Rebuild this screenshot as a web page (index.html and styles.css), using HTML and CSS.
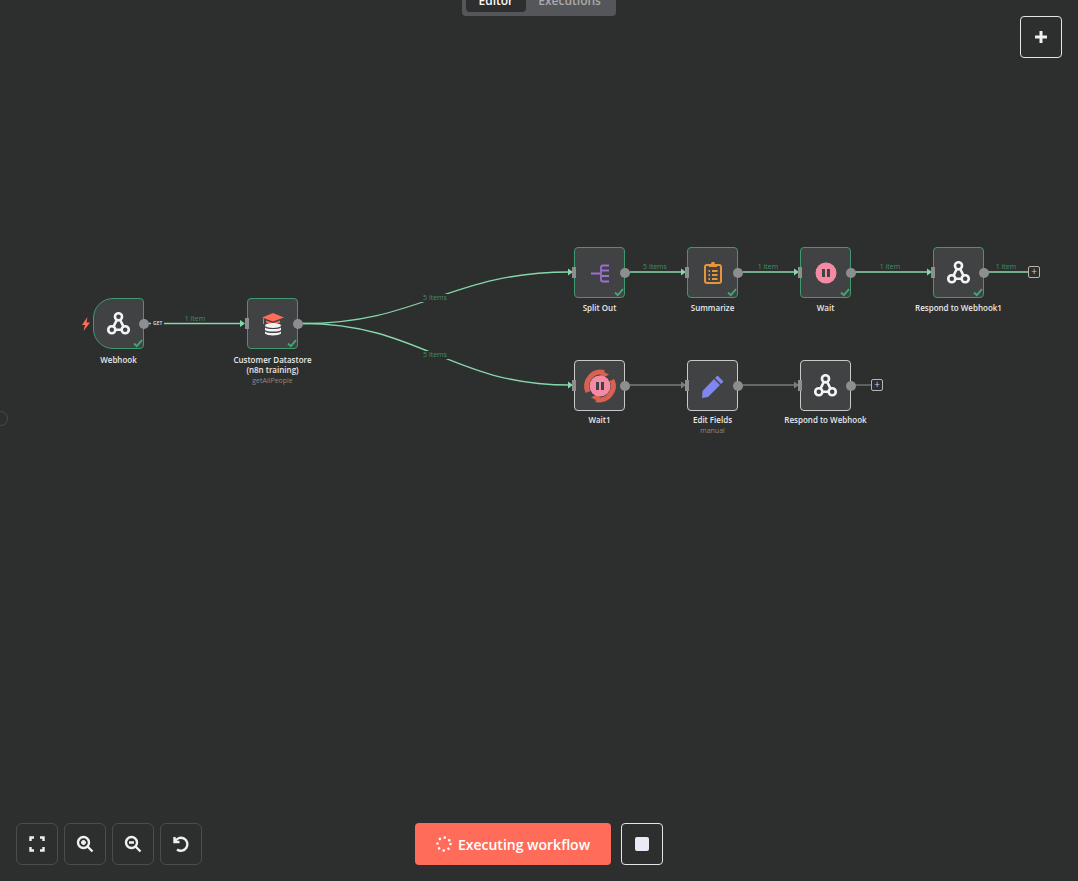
FILE: index.html
```html
<!DOCTYPE html>
<html lang="en">
  <head>
    <meta charset="UTF-8" />
    <title>Workflow</title>
    <link rel="stylesheet" href="styles.css">
  </head>
  <body>
    <svg class="defs" width="0" height="0">
      <symbol id="webhook" viewBox="0 0 24 24">
        <circle cx="12" cy="5" r="3.700" />
        <circle cx="5" cy="18.500" r="3.700" />
        <circle cx="19" cy="18.500" r="3.700" />
        <path d="M10.200 8.300 6.800 15.200M13.800 8.300 17.200 15.200M8.700 18.500H15.300" />
      </symbol>
      <symbol id="check" viewBox="0 0 10 10">
        <path d="M1 5.500 3.800 8.200 9 2.200" />
      </symbol>
    </svg>

    <div class="canvas">
      <!-- connections between the nodes -->
      <svg class="edges" width="1078" height="881">
        <g class="edge-done">
          <path d="M149 323.500H243" />
          <path d="M303 323.500C420 323.500 450 272 570 272" />
          <path d="M303 323.500C420 323.500 450 385 570 385" />
          <path d="M630 272H683" />
          <path d="M743 272H796" />
          <path d="M855 272H929" />
          <path d="M988 272H1028" />
        </g>
        <g class="edge-idle">
          <path d="M630 385H683" />
          <path d="M743 385H796" />
          <path d="M855 385H871" />
        </g>
        <g class="arrow-done">
          <path d="M240 320 245 323.500 240 327Z" />
          <path d="M568 268.500 573 272 568 275.500Z" />
          <path d="M568 381.500 573 385 568 388.500Z" />
          <path d="M681 268.500 686 272 681 275.500Z" />
          <path d="M794 268.500 799 272 794 275.500Z" />
          <path d="M927 268.500 932 272 927 275.500Z" />
        </g>
        <g class="arrow-idle">
          <path d="M681 381.500 686 385 681 388.500Z" />
          <path d="M794 381.500 799 385 794 388.500Z" />
        </g>
      </svg>

      <span class="edge-label label-a">1 item</span>
      <span class="edge-label label-b">5 items</span>
      <span class="edge-label label-c">5 items</span>
      <span class="edge-label label-d">5 items</span>
      <span class="edge-label label-e">1 item</span>
      <span class="edge-label label-f">1 item</span>
      <span class="edge-label label-g">1 item</span>
      <span class="get-label">GET</span>

      <svg class="bolt" width="10" height="14" viewBox="0 0 10 14">
        <path d="M6.500 0 1 8h3L2.500 14 9 5.500H5.500Z" />
      </svg>

      <!-- first branch -->
      <div class="node done trigger n-webhook">
        <svg class="icon line-icon" width="23" height="23"><use href="#webhook" /></svg>
        <svg class="check" width="10" height="10"><use href="#check" /></svg>
        <i class="port-out"></i>
        <div class="node-label">Webhook</div>
      </div>

      <div class="node done n-store">
        <svg class="icon" width="24" height="24" viewBox="0 0 24 24">
          <path class="cap" d="M12 1 23 5.500 12 9.500 1 5.500Z" />
          <path class="cap" d="M5 8.500 12 11 19 8.500V10.500L12 12.500 5 10.500Z" />
          <path class="cap" d="M2 6.500H3V12H2Z" />
          <ellipse class="drum" cx="12" cy="13.500" rx="8" ry="2.500" />
          <path class="drum" d="M4 15.500C6 17.500 18 17.500 20 15.500V18C18 20 6 20 4 18Z" />
          <path class="drum" d="M4 19.500C6 21.500 18 21.500 20 19.500V21.500C18 24 6 24 4 21.500Z" />
        </svg>
        <svg class="check" width="10" height="10"><use href="#check" /></svg>
        <i class="port-in"></i><i class="port-out"></i>
        <div class="node-label">Customer Datastore<br />(n8n training)<small>getAllPeople</small></div>
      </div>

      <div class="node done upper n-split">
        <svg class="icon" width="24" height="24" viewBox="0 0 24 24">
          <path class="split" d="M3 12.500H12M21 4.500H15Q13 4.500 13 6.500V18.500Q13 20.500 15 20.500H21M14 9.500H21M14 15H21" />
        </svg>
        <svg class="check" width="10" height="10"><use href="#check" /></svg>
        <i class="port-in"></i><i class="port-out"></i>
        <div class="node-label">Split Out</div>
      </div>

      <div class="node done upper n-summarize">
        <svg class="icon" width="24" height="24" viewBox="0 0 24 24">
          <path class="clip" d="M8 4H6Q4 4 4 6V20Q4 22 6 22H18Q20 22 20 20V6Q20 4 18 4H16" />
          <path class="clip-fill" d="M8 3H10C10 0 14 0 14 3H16V6H8Z" />
          <path class="clip" d="M7.500 10H9M11 10H16.500M7.500 14H9M11 14H16.500M7.500 18H9M11 18H16.500" />
        </svg>
        <svg class="check" width="10" height="10"><use href="#check" /></svg>
        <i class="port-in"></i><i class="port-out"></i>
        <div class="node-label">Summarize</div>
      </div>

      <div class="node done upper n-wait">
        <svg class="icon" width="22" height="22" viewBox="0 0 22 22">
          <circle class="pause-bg" cx="11" cy="11" r="10.500" />
          <path class="pause-bar" d="M7 7H10V15H7ZM12 7H15V15H12Z" />
        </svg>
        <svg class="check" width="10" height="10"><use href="#check" /></svg>
        <i class="port-in"></i><i class="port-out"></i>
        <div class="node-label">Wait</div>
      </div>

      <div class="node done upper n-respond1">
        <svg class="icon line-icon" width="23" height="23"><use href="#webhook" /></svg>
        <svg class="check" width="10" height="10"><use href="#check" /></svg>
        <i class="port-in"></i><i class="port-out"></i>
        <div class="node-label">Respond to Webhook1</div>
      </div>

      <div class="add-box add-a">+</div>

      <!-- second branch -->
      <div class="node lower n-wait1">
        <svg class="icon spin-icon" width="32" height="32" viewBox="0 0 32 32">
          <path class="spin-arc" d="M4 22A14 14 0 0 1 20 2.500" />
          <path class="spin-head" d="M16 0 25 4.500 17 9Z" />
          <path class="spin-arc" d="M28 10A14 14 0 0 1 12 29.500" />
          <path class="spin-head" d="M16 32 7 27.500 15 23Z" />
          <circle class="pause-bg" cx="16" cy="16" r="10.500" />
          <path class="pause-bar" d="M12 12H15V20H12ZM17 12H20V20H17Z" />
        </svg>
        <i class="port-in"></i><i class="port-out"></i>
        <div class="node-label">Wait1</div>
      </div>

      <div class="node lower n-edit">
        <svg class="icon" width="24" height="24" viewBox="0 0 24 24">
          <path class="pencil" d="M16.500 1.500 22.500 7.500 20 10 14 4ZM13 5 19 11 7 23 1 24 1.500 17Z" />
        </svg>
        <i class="port-in"></i><i class="port-out"></i>
        <div class="node-label">Edit Fields<small>manual</small></div>
      </div>

      <div class="node lower n-respond">
        <svg class="icon line-icon" width="23" height="23"><use href="#webhook" /></svg>
        <i class="port-in"></i><i class="port-out"></i>
        <div class="node-label">Respond to Webhook</div>
      </div>

      <div class="add-box add-b">+</div>

      <div class="side-toggle"></div>
    </div>

    <div class="tabs">
      <span class="tab active">Editor</span>
      <span class="tab">Executions</span>
    </div>

    <button class="btn-square add-node" type="button">
      <svg width="16" height="16" viewBox="0 0 16 16"><path class="plus-line" d="M8 2V14M2 8H14" /></svg>
    </button>

    <!-- zoom controls -->
    <div class="zoom-tools">
      <button class="tool" type="button">
        <svg width="16" height="16" viewBox="0 0 16 16"><path class="tool-line" d="M1.500 5V1.500H5M11 1.500H14.500V5M14.500 11V14.500H11M5 14.500H1.500V11" /></svg>
      </button>
      <button class="tool" type="button">
        <svg width="18" height="18" viewBox="0 0 18 18"><circle class="tool-line" cx="7.500" cy="7.500" r="5.500" /><path class="tool-line" d="M11.500 11.500 16.500 16.500M7.500 5V10M5 7.500H10" /></svg>
      </button>
      <button class="tool" type="button">
        <svg width="18" height="18" viewBox="0 0 18 18"><circle class="tool-line" cx="7.500" cy="7.500" r="5.500" /><path class="tool-line" d="M11.500 11.500 16.500 16.500M5 7.500H10" /></svg>
      </button>
      <button class="tool" type="button">
        <svg width="18" height="18" viewBox="0 0 18 18"><path class="tool-line" d="M2.500 2V7H7.500M2.800 7A6.500 6.500 0 1 1 5 14.500" /></svg>
      </button>
    </div>

    <div class="run-tools">
      <button class="run-btn" type="button">
        <svg width="16" height="16" viewBox="0 0 16 16"><circle class="spinner" cx="8" cy="8" r="6.500" /></svg>
        Executing workflow
      </button>
      <button class="btn-square" type="button"><span class="stop"></span></button>
    </div>
  </body>
</html>
```

FILE: styles.css
```css
html,
body {
  margin: 0;
  height: 100%;
  overflow: hidden;
}

body {
  position: relative;
  background-color: #2d2e2e;
  font-family: "Open Sans", "Liberation Sans", sans-serif;
}

button {
  font-family: inherit;
  cursor: pointer;
}

.defs {
  position: absolute;
}

.canvas {
  position: absolute;
  inset: 0;
}

.edges {
  position: absolute;
  left: 0;
  top: 0;
}

.edge-done path {
  fill: none;
  stroke: #86d8ac;
  stroke-width: 1.300;
}

.edge-idle path {
  fill: none;
  stroke: #7b7c7d;
  stroke-width: 1.300;
}

.arrow-done path {
  fill: #86d8ac;
}

.arrow-idle path {
  fill: #7b7c7d;
}

/* text on the connections */
.edge-label {
  position: absolute;
  transform: translateX(-50%);
  padding: 0 2px;
  color: #3f9168;
  font-size: 7px;
  line-height: 8px;
  white-space: nowrap;
}

.label-a { left: 195px; top: 315px; }
.label-b { left: 435px; top: 294px; background-color: #2d2e2e; }
.label-c { left: 435px; top: 351px; background-color: #2d2e2e; }
.label-d { left: 655px; top: 263px; }
.label-e { left: 768px; top: 263px; }
.label-f { left: 890px; top: 263px; }
.label-g { left: 1006px; top: 263px; }

.get-label {
  position: absolute;
  left: 151px;
  top: 320px;
  padding: 0 2px;
  background-color: #2d2e2e;
  color: #e4e4e4;
  font-size: 5px;
  font-weight: 600;
  line-height: 7px;
}

.bolt {
  position: absolute;
  left: 81px;
  top: 317px;
  fill: #ff6d5a;
}

/* nodes */
.node {
  position: absolute;
  box-sizing: border-box;
  display: flex;
  align-items: center;
  justify-content: center;
  width: 51px;
  height: 51px;
  background-color: #414244;
  border: 1.500px solid #c9c9c9;
  border-radius: 4px;
}

.node.done {
  border-color: #3f9a6e;
}

.node.trigger {
  border-radius: 20px 4px 4px 20px;
}

.n-webhook { left: 93px; top: 298px; }
.n-store { left: 247px; top: 298px; }
.n-split { left: 574px; top: 247px; }
.n-summarize { left: 687px; top: 247px; }
.n-wait { left: 800px; top: 247px; }
.n-respond1 { left: 933px; top: 247px; }
.n-wait1 { left: 574px; top: 360px; }
.n-edit { left: 687px; top: 360px; }
.n-respond { left: 800px; top: 360px; }

.port-out {
  position: absolute;
  right: -6px;
  top: 50%;
  width: 10px;
  height: 10px;
  margin-top: -5px;
  border-radius: 50%;
  background-color: #8d8e8f;
}

.port-in {
  position: absolute;
  left: -3px;
  top: 50%;
  width: 4px;
  height: 11px;
  margin-top: -5.500px;
  background-color: #8d8e8f;
}

.check {
  position: absolute;
  right: 0;
  bottom: 0;
  fill: none;
  stroke: #43a877;
  stroke-width: 1.800;
}

.node-label {
  position: absolute;
  top: calc(100% + 6.500px);
  left: 50%;
  transform: translateX(-50%);
  color: #e8e8e8;
  font-size: 8px;
  font-weight: 600;
  line-height: 10px;
  text-align: center;
  white-space: nowrap;
}

.upper .node-label {
  top: calc(100% + 5.500px);
}

.lower .node-label {
  top: calc(100% + 4.500px);
}

.node-label small {
  display: block;
  margin-top: 1px;
  color: #8a8b8c;
  font-size: 7px;
  font-weight: 400;
}

.line-icon {
  fill: none;
  stroke: #f4f4f4;
  stroke-width: 2.700;
}

.cap {
  fill: #ff6d5a;
}

.drum {
  fill: #f2f2f2;
}

.split {
  fill: none;
  stroke: #9c6fd0;
  stroke-width: 1.800;
}

.clip {
  fill: none;
  stroke: #e8953a;
  stroke-width: 2;
}

.clip-fill {
  fill: #e8953a;
}

.pause-bg {
  fill: #f58aa5;
}

.pause-bar {
  fill: #414244;
}

.spin-icon {
  overflow: visible;
}

.spin-arc {
  fill: none;
  stroke: #d9614f;
  stroke-width: 5;
}

.spin-head {
  fill: #d9614f;
}

.pencil {
  fill: #7f86f0;
}

.add-box {
  position: absolute;
  box-sizing: border-box;
  width: 12px;
  height: 12px;
  border: 1px solid #b5b5b5;
  border-radius: 2px;
  background-color: #2d2e2e;
  color: #d0d0d0;
  font-size: 10px;
  line-height: 9px;
  text-align: center;
}

.add-a { left: 1028px; top: 266px; }
.add-b { left: 871px; top: 379px; }

.side-toggle {
  position: absolute;
  left: -7px;
  top: 411px;
  width: 15px;
  height: 15px;
  box-sizing: border-box;
  border: 1px solid #4a4b4c;
  border-radius: 50%;
}

/* editor / executions tabs */
.tabs {
  position: absolute;
  left: 462px;
  top: -15px;
  display: flex;
  box-sizing: border-box;
  width: 154px;
  height: 31px;
  padding: 4px;
  border-radius: 4px;
  background-color: #555659;
}

.tab {
  padding: 0 12px;
  color: #a9aaab;
  font-size: 12px;
  font-weight: 600;
  line-height: 23px;
}

.tab.active {
  padding: 0 13px 0 12.500px;
  border-radius: 4px;
  background-color: #2d2e2e;
  color: #fafafa;
}

.btn-square {
  display: flex;
  align-items: center;
  justify-content: center;
  box-sizing: border-box;
  width: 42px;
  height: 42px;
  padding: 0;
  border: 1px solid #e4e4e4;
  border-radius: 4px;
  background-color: #2d2e2e;
}

.add-node {
  position: absolute;
  left: 1020px;
  top: 16px;
}

.plus-line {
  fill: none;
  stroke: #f0f0f0;
  stroke-width: 3;
}

.tool-line {
  fill: none;
  stroke: #f0f0f0;
  stroke-width: 2.400;
}

.zoom-tools {
  position: absolute;
  left: 16px;
  bottom: 16px;
  display: flex;
  gap: 6px;
}

.tool {
  display: flex;
  align-items: center;
  justify-content: center;
  box-sizing: border-box;
  width: 42px;
  height: 42px;
  padding: 0;
  border: 1px solid #4b4c4d;
  border-radius: 6px;
  background-color: #2d2e2e;
}

.run-tools {
  position: absolute;
  left: 415px;
  bottom: 16px;
  display: flex;
  gap: 10px;
}

.run-btn {
  display: flex;
  align-items: center;
  justify-content: center;
  gap: 6px;
  width: 196px;
  height: 42px;
  padding: 0;
  border: none;
  border-radius: 4px;
  background-color: #ff6d5a;
  color: #fff;
  font-size: 14px;
  font-weight: 600;
}

.spinner {
  fill: none;
  stroke: #fff;
  stroke-width: 2.600;
  stroke-linecap: round;
  stroke-dasharray: 0.010 5.095;
}

.stop {
  width: 14px;
  height: 14px;
  border-radius: 2px;
  background-color: #e8eaf6;
}
```
